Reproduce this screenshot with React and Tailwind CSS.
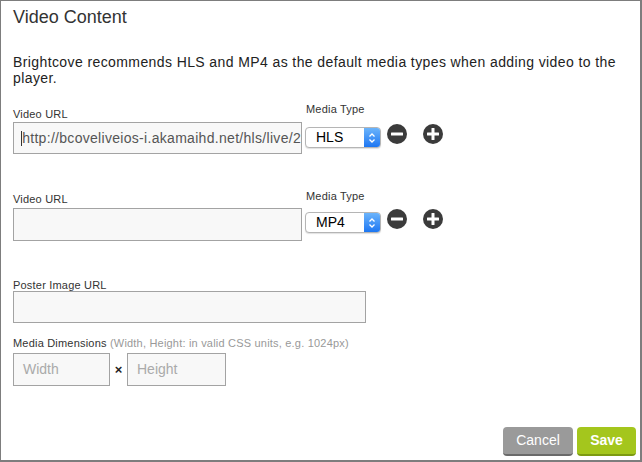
import React from 'react';

const font = { fontFamily: '"Liberation Sans", Arial, sans-serif' };

function Label({ children, className = '' }) {
  return <div className={`text-[11px] leading-[12px] tracking-[0.2px] text-[#333] ${className}`}>{children}</div>;
}

function Field({ className = '', children }) {
  return (
    <div className={`h-[32px] border border-[#a3a3a3] bg-[#f8f8f8] flex items-center overflow-hidden whitespace-nowrap text-[14px] ${className}`}>
      {children}
    </div>
  );
}

function Select({ value }) {
  return (
    <div className="flex h-[21px] w-[76px] rounded-[4px] border border-[#b5b5b5] bg-white shadow-[0_1px_1px_rgba(0,0,0,0.12)] overflow-hidden">
      <div className="flex-1 pl-[10px] text-[14px] leading-[19px] text-black">{value}</div>
      <div className="w-[16px] bg-gradient-to-b from-[#6bb4fb] to-[#1b76f2] flex items-center justify-center">
        <svg width="8" height="12" viewBox="0 0 8 12" fill="none" stroke="white" strokeWidth="1.3">
          <path d="M1.5 4.5 L4 2 L6.5 4.5" />
          <path d="M1.5 7.5 L4 10 L6.5 7.5" />
        </svg>
      </div>
    </div>
  );
}

function CircleBtn({ plus }) {
  return (
    <svg width="20" height="20" viewBox="0 0 20 20">
      <circle cx="10" cy="10" r="10" fill="#3b3b3b" />
      <rect x="4" y="8.5" width="12" height="3" rx="0.5" fill="white" />
      {plus && <rect x="8.5" y="4" width="3" height="12" rx="0.5" fill="white" />}
    </svg>
  );
}

function VideoRow({ url, type, top, leftPad, inputGap, rightGap, inputH }) {
  return (
    <div className={`flex items-start ${top}`}>
      <div className={`w-[289px] ${leftPad}`}>
        <Label>Video URL</Label>
        <Field className={`${inputGap} ${inputH}`}>
          {url && (
            <>
              <span className="ml-[7px] w-px h-[15px] bg-[#333]" />
              <span className="ml-px text-[#555] tracking-[0.3px]">{url}</span>
            </>
          )}
        </Field>
      </div>
      <div className="ml-[3px]">
        <Label className="pl-px">Media Type</Label>
        <div className={`flex items-start ${rightGap}`}>
          <Select value={type} />
          <div className="ml-[6px] -mt-[3px]"><CircleBtn /></div>
          <div className="ml-[16px] -mt-[3px]"><CircleBtn plus /></div>
        </div>
      </div>
    </div>
  );
}

export default function App() {
  return (
    <div
      style={font}
      className="w-[642px] h-[462px] bg-white border-t border-l border-r-2 border-b-2 border-[#7d7d7d] flex flex-col pl-[12px] pr-[4px] pb-[4px]"
    >
      <h1 className="mt-[5px] text-[18px] leading-[22px] text-[#333]">Video Content</h1>
      <p className="mt-[26px] pr-[8px] text-[14px] leading-[16px] tracking-[0.4px] text-[#222]">
        Brightcove recommends HLS and MP4 as the default media types when adding video to the player.
      </p>

      <VideoRow
        url="http://bcoveliveios-i.akamaihd.net/hls/live/2"
        type="HLS"
        top="mt-[17px]"
        leftPad="pt-[5px]"
        inputGap="mt-[2px]"
        rightGap="mt-[12px]"
        inputH="h-[32px]"
      />
      <VideoRow
        type="MP4"
        top="mt-[36px]"
        leftPad="pt-[3px]"
        inputGap="mt-[3px]"
        rightGap="mt-[10px]"
        inputH="h-[33px]"
      />

      <div className="mt-[38px]">
        <Label>Poster Image URL</Label>
        <Field className="w-[353px] h-[31px]" />
      </div>

      <div className="mt-[14px]">
        <Label>
          Media Dimensions <span className="text-[#999]">(Width, Height: in valid CSS units, e.g. 1024px)</span>
        </Label>
        <div className="mt-[4px] flex items-center">
          <Field className="w-[97px] h-[33px] pl-[9px] text-[#aaa]">Width</Field>
          <span className="w-[17px] text-center text-[13px] font-bold text-[#222]">×</span>
          <Field className="w-[99px] h-[33px] pl-[9px] text-[#aaa]">Height</Field>
        </div>
      </div>

      <div className="mt-auto flex justify-end gap-[4px]">
        <button className="w-[70px] h-[29px] rounded-[4px] bg-[#9a9a9a] border-b-2 border-[#6a6a6a] text-white text-[14px]">
          Cancel
        </button>
        <button className="w-[59px] h-[29px] rounded-[4px] bg-[#a4c61d] border-b-2 border-[#7c9a12] text-white text-[14px] font-bold">
          Save
        </button>
      </div>
    </div>
  );
}
